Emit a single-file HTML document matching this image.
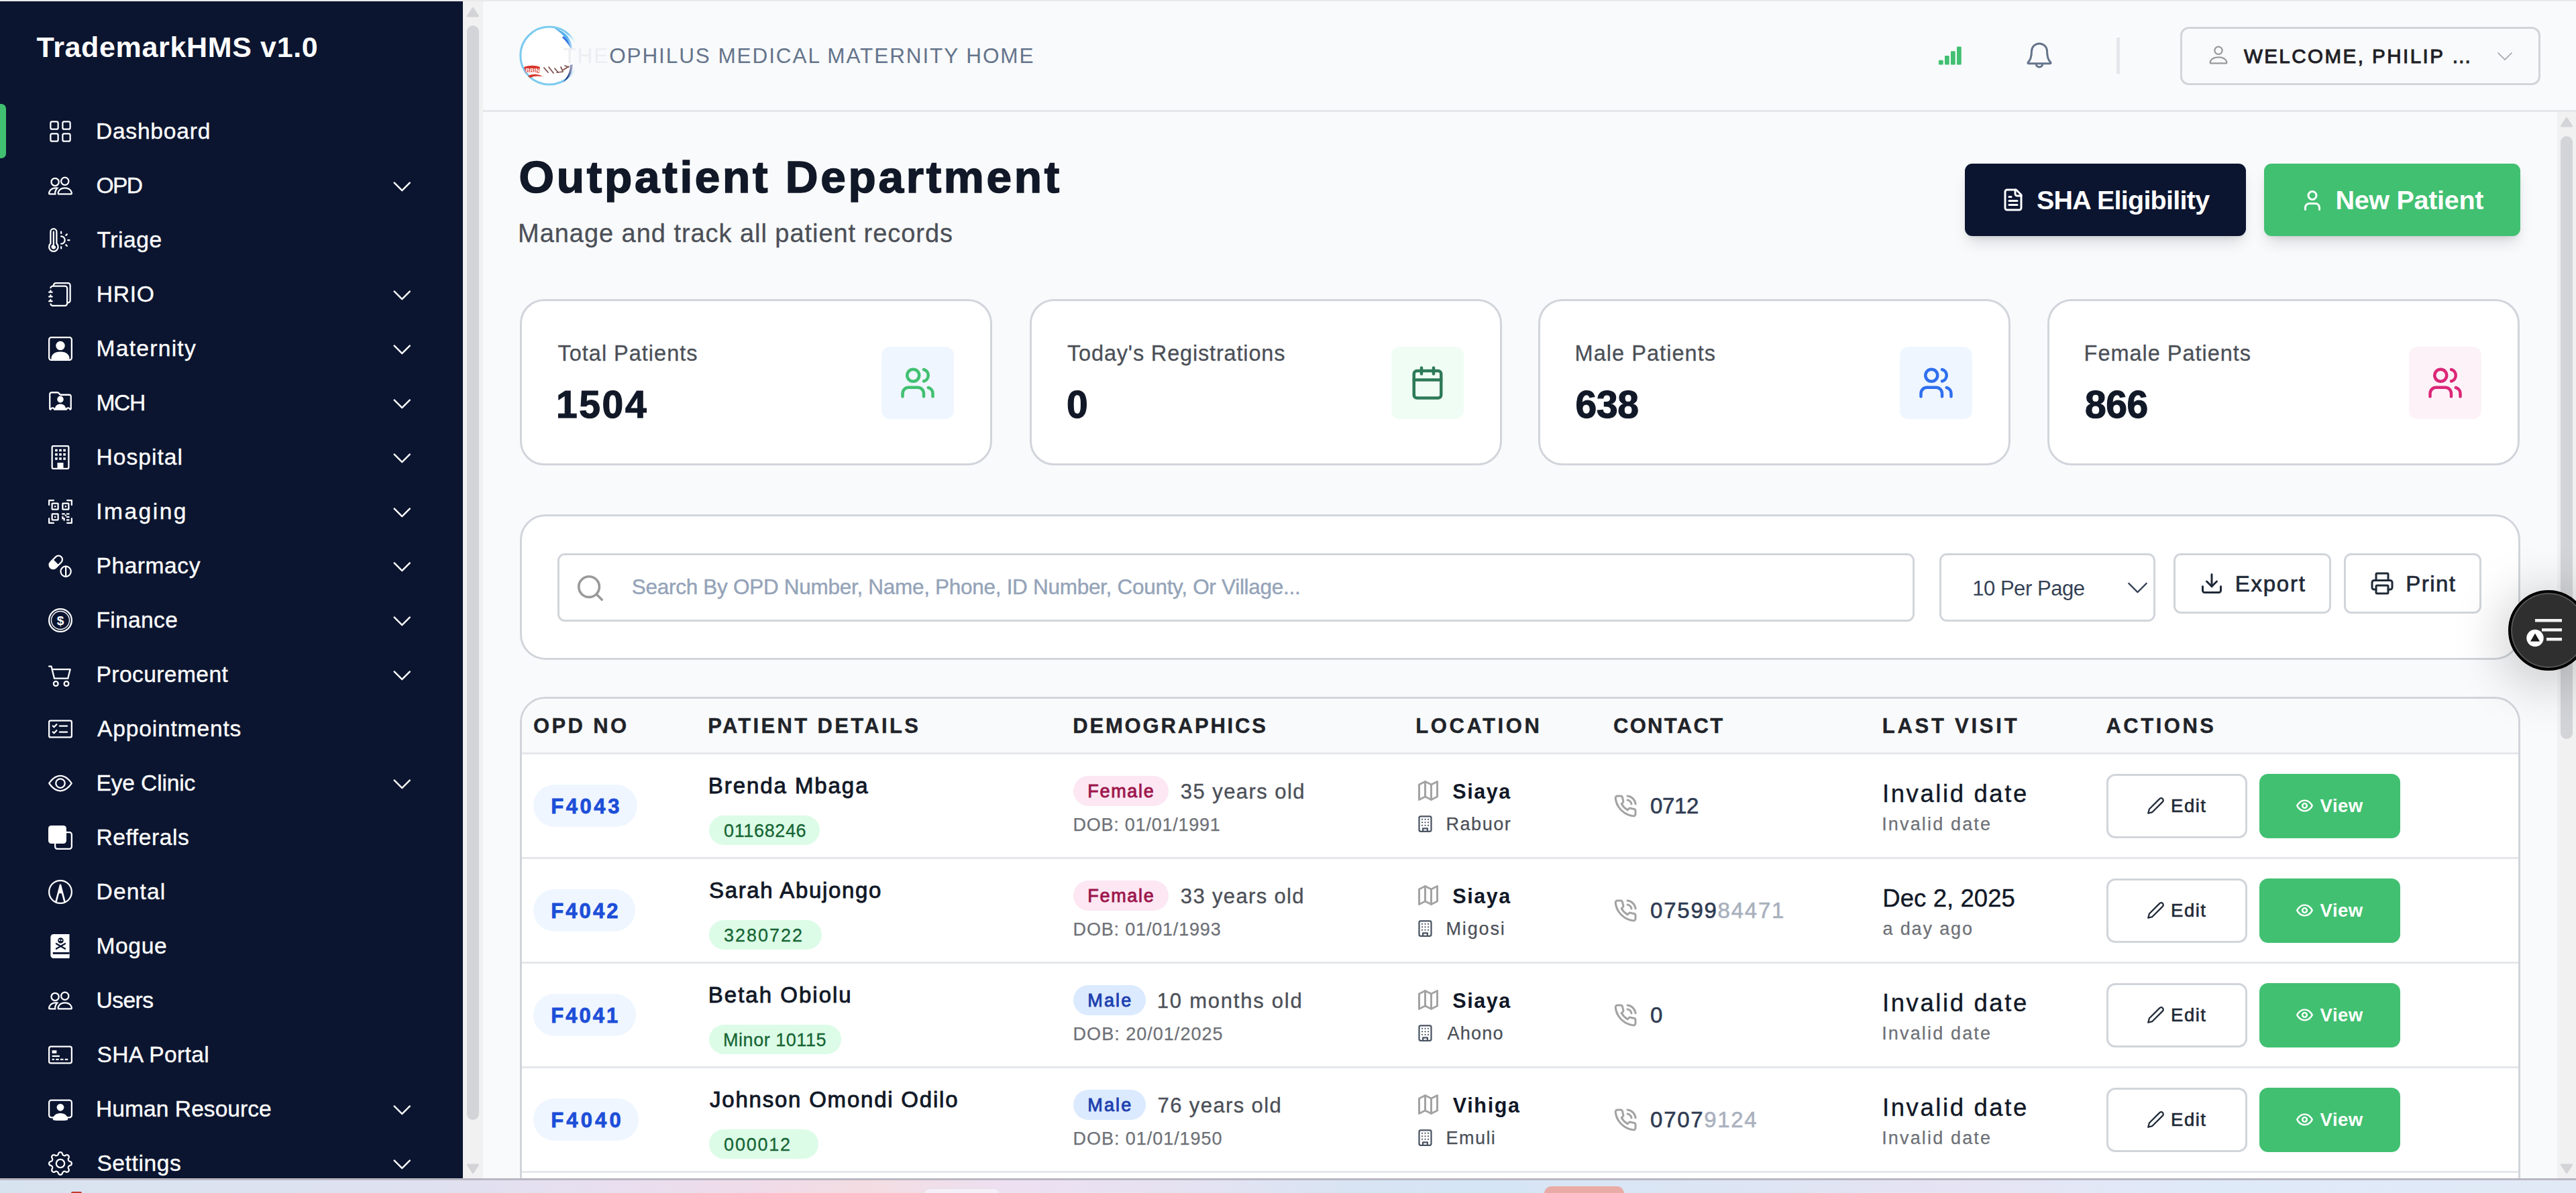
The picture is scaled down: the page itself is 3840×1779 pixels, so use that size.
<!DOCTYPE html>
<html lang="en"><head><meta charset="utf-8"><title>Outpatient Department - TrademarkHMS v1.0</title>
<style>
*{box-sizing:border-box;margin:0;padding:0}
html,body{width:3840px;height:1779px;overflow:hidden;background:#f9fafb;font-family:"Liberation Sans",sans-serif}
#main{position:absolute;left:0;top:0;width:3840px;height:1757px;overflow:hidden;background:#f9fafb}
.b{position:absolute}
.ic{position:absolute;display:block;overflow:visible}
.t{position:absolute;white-space:nowrap;line-height:1;display:block}
</style></head>
<body>
<div id="main">
<header>
<div class="b" style="left:720px;top:2px;width:3120px;height:165px;background:#f9fafb;border-bottom:3px solid #e5e7eb;"></div>
<svg class="ic" style="left:770px;top:34px" width="100" height="98" viewBox="0 0 100 98">
<g>
<circle cx="48.800" cy="49" r="43" fill="#ffffff" stroke="#7ccbf0" stroke-width="3"/>
<path d="M56 8c13 3 22 11 26 23c1 4 1 7 0 10c-3-12-10-22-26-33z" fill="#58b0ee"/>
<path d="M70 20c6 5 10 12 12 21c-4-8-8-14-14-19z" fill="#2f6fe0"/>
<path d="M11 66c8-3 17-3 24 0l-1 9c-7-2-14-2-20 0z" fill="#d8362c"/>
<path d="M17 79c7-3 15-3 22 1c-7-1-13-1-19 2z" fill="#d8362c"/>
<path d="M41 67l6 7M48 66l7 9M57 68l5 6M60 74l9-1M66 66l3 6M72 64l6 2M70 70l8-5" fill="none" stroke="#5a1f1a" stroke-width="1.700" stroke-linecap="round" opacity=".8"/>
<path d="M84 62c0 12-6 21-15 27c7-8 11-16 11-26z" fill="#1f2f7a"/>
<text x="13.500" y="73.500" font-family="Liberation Sans, sans-serif" font-size="8.500" font-weight="700" fill="#ffffff">BRIN</text>
</g>
</svg>
<div class="b" style="left:846px;top:30px;width:30px;height:106px;background:linear-gradient(90deg,rgba(249,250,251,0) 0%,#f9fafb 36%,#f9fafb 100%);"></div>
<span class="t " style="left:839.4px;top:68.0px;font-size:31.5px;font-weight:400;color:#64748b;letter-spacing:1.91px;"><span style="color:#eceef2;-webkit-text-stroke-color:#eceef2">THE</span>OPHILUS MEDICAL MATERNITY HOME</span>
<svg class="ic" style="left:2889.5px;top:64.8px;color:#41c071" width="36" height="36" viewBox="0 0 16 16" fill="currentColor" ><path d="M0 11.5a.5.5 0 0 1 .5-.5h2a.5.5 0 0 1 .5.5v2a.5.5 0 0 1-.5.5h-2a.5.5 0 0 1-.5-.5v-2zm4-3a.5.5 0 0 1 .5-.5h2a.5.5 0 0 1 .5.5v5a.5.5 0 0 1-.5.5h-2a.5.5 0 0 1-.5-.5v-5zm4-3a.5.5 0 0 1 .5-.5h2a.5.5 0 0 1 .5.5v8a.5.5 0 0 1-.5.5h-2a.5.5 0 0 1-.5-.5v-8zm4-3a.5.5 0 0 1 .5-.5h2a.5.5 0 0 1 .5.5v11a.5.5 0 0 1-.5.5h-2a.5.5 0 0 1-.5-.5v-11z"/></svg>
<svg class="ic" style="left:3018.7px;top:62px;color:#64748b" width="42" height="42" viewBox="0 0 16 16" fill="currentColor" stroke="currentColor" stroke-width=".35"><g fill="none" stroke="currentColor" stroke-width="1.15" stroke-linecap="round" stroke-linejoin="round"><path d="M8 1.100a4.400 4.400 0 0 0-4.400 4.400c0 2.900-.6 4.900-2 6.300c-.2.300 0 .700.400.700h12c.400 0 .600-.400.400-.700c-1.400-1.400-2-3.400-2-6.300A4.400 4.400 0 0 0 8 1.100z"/><path d="M6.200 12.700a1.800 1.800 0 0 0 3.600 0"/></g></svg>
<div class="b" style="left:3154.5px;top:56px;width:5px;height:54px;background:#e5e7eb;"></div>
<div class="b" style="left:3250px;top:40px;width:537px;height:87px;border:3px solid #d4d4d8;border-radius:13px;background:#f9fafb;"></div>
<svg class="ic" style="left:3289px;top:64px;color:#9a9a9a" width="36" height="36" viewBox="0 0 16 16" fill="currentColor" ><path d="M8 8a3 3 0 1 0 0-6 3 3 0 0 0 0 6zm2-3a2 2 0 1 1-4 0 2 2 0 0 1 4 0zm4 8c0 1-1 1-1 1H3s-1 0-1-1 1-4 6-4 6 3 6 4zm-1-.004c-.001-.246-.154-.986-.832-1.664C11.516 10.68 10.289 10 8 10c-2.29 0-3.516.68-4.168 1.332-.678.678-.83 1.418-.832 1.664h10z"/></svg>
<span class="t " style="left:3344.9px;top:69.3px;font-size:29.5px;font-weight:400;color:#1f1f27;letter-spacing:2.48px;-webkit-text-stroke:1.0px #1f1f27;">WELCOME, PHILIP …</span>
<svg class="ic" style="left:3714.4px;top:64px;color:#a1a1aa" width="40" height="40" viewBox="0 0 24 24" fill="none" stroke="currentColor" stroke-width="1.0" stroke-linecap="round" stroke-linejoin="round"><path d="M6 9l6 6 6-6"/></svg>
</header>
<section>
<span class="t " style="left:773.6px;top:230.3px;font-size:67.5px;font-weight:700;color:#111827;letter-spacing:3.72px;-webkit-text-stroke:1.6px #111827;">Outpatient Department</span>
<span class="t " style="left:772.1px;top:328.8px;font-size:38px;font-weight:400;color:#4b4f57;letter-spacing:0.95px;-webkit-text-stroke:0.3px #4b4f57;">Manage and track all patient records</span>
<div class="b" style="left:2929px;top:244px;width:419px;height:108px;background:#0b1530;border-radius:11px;box-shadow:0 14px 22px -6px rgba(15,23,42,.16),0 5px 9px -4px rgba(15,23,42,.10);"></div>
<svg class="ic" style="left:2982.6px;top:279.7px;color:#fff" width="36" height="36" viewBox="0 0 24 24" fill="none" stroke="currentColor" stroke-width="2" stroke-linecap="round" stroke-linejoin="round"><path d="M15 2H6a2 2 0 0 0-2 2v16a2 2 0 0 0 2 2h12a2 2 0 0 0 2-2V7Z"/><path d="M14 2v4a2 2 0 0 0 2 2h4"/><path d="M10 9H8"/><path d="M16 13H8"/><path d="M16 17H8"/></svg>
<span class="t " style="left:3035.9px;top:278.6px;font-size:39.5px;font-weight:700;color:#fff;letter-spacing:-0.73px;">SHA Eligibility</span>
<div class="b" style="left:3375px;top:244px;width:382px;height:108px;background:#41c071;border-radius:11px;box-shadow:0 14px 22px -6px rgba(15,23,42,.16),0 5px 9px -4px rgba(15,23,42,.10);"></div>
<svg class="ic" style="left:3428.7px;top:281px;color:#fff" width="36" height="36" viewBox="0 0 24 24" fill="none" stroke="currentColor" stroke-width="2" stroke-linecap="round" stroke-linejoin="round"><path d="M19 21v-2a4 4 0 0 0-4-4H9a4 4 0 0 0-4 4v2"/><circle cx="12" cy="7" r="4"/></svg>
<span class="t " style="left:3481.4px;top:278.6px;font-size:39.5px;font-weight:700;color:#fff;letter-spacing:-0.29px;">New Patient</span>
</section>
<section>
<div class="b" style="left:775px;top:446px;width:704px;height:248px;background:#fff;border:3px solid #d1d5db;border-radius:36px;"></div>
<span class="t " style="left:831.5px;top:510.5px;font-size:32.5px;font-weight:400;color:#4b4f57;letter-spacing:0.99px;-webkit-text-stroke:0.3px #4b4f57;">Total Patients</span>
<span class="t " style="left:829.0px;top:574.7px;font-size:57px;font-weight:700;color:#111827;letter-spacing:2.61px;-webkit-text-stroke:1.2px #111827;">1504</span>
<div class="b" style="left:1314px;top:517px;width:108px;height:108px;background:#eff6ff;border-radius:13px;"></div>
<svg class="ic" style="left:1341px;top:544px;color:#41c071" width="54" height="54" viewBox="0 0 24 24" fill="none" stroke="currentColor" stroke-width="2" stroke-linecap="round" stroke-linejoin="round"><path d="M16 21v-2a4 4 0 0 0-4-4H6a4 4 0 0 0-4 4v2"/><circle cx="9" cy="7" r="4"/><path d="M22 21v-2a4 4 0 0 0-3-3.870"/><path d="M16 3.130a4 4 0 0 1 0 7.750"/></svg>
<div class="b" style="left:1534.5px;top:446px;width:704px;height:248px;background:#fff;border:3px solid #d1d5db;border-radius:36px;"></div>
<span class="t " style="left:1591.0px;top:510.5px;font-size:32.5px;font-weight:400;color:#4b4f57;letter-spacing:0.83px;-webkit-text-stroke:0.3px #4b4f57;">Today&#x27;s Registrations</span>
<span class="t " style="left:1590.0px;top:574.7px;font-size:57px;font-weight:700;color:#111827;letter-spacing:0.00px;-webkit-text-stroke:1.2px #111827;">0</span>
<div class="b" style="left:2073.5px;top:517px;width:108px;height:108px;background:#f0fdf4;border-radius:13px;"></div>
<svg class="ic" style="left:2100.5px;top:544px;color:#2d7a58" width="54" height="54" viewBox="0 0 24 24" fill="none" stroke="currentColor" stroke-width="2" stroke-linecap="round" stroke-linejoin="round"><path d="M8 2v4"/><path d="M16 2v4"/><rect width="18" height="18" x="3" y="4" rx="2"/><path d="M3 10h18"/></svg>
<div class="b" style="left:2293px;top:446px;width:704px;height:248px;background:#fff;border:3px solid #d1d5db;border-radius:36px;"></div>
<span class="t " style="left:2347.6px;top:510.5px;font-size:32.5px;font-weight:400;color:#4b4f57;letter-spacing:1.04px;-webkit-text-stroke:0.3px #4b4f57;">Male Patients</span>
<span class="t " style="left:2348.6px;top:574.7px;font-size:57px;font-weight:700;color:#111827;letter-spacing:-0.34px;-webkit-text-stroke:1.2px #111827;">638</span>
<div class="b" style="left:2832px;top:517px;width:108px;height:108px;background:#eff6ff;border-radius:13px;"></div>
<svg class="ic" style="left:2859px;top:544px;color:#2f6fed" width="54" height="54" viewBox="0 0 24 24" fill="none" stroke="currentColor" stroke-width="2" stroke-linecap="round" stroke-linejoin="round"><path d="M16 21v-2a4 4 0 0 0-4-4H6a4 4 0 0 0-4 4v2"/><circle cx="9" cy="7" r="4"/><path d="M22 21v-2a4 4 0 0 0-3-3.870"/><path d="M16 3.130a4 4 0 0 1 0 7.750"/></svg>
<div class="b" style="left:3052px;top:446px;width:704px;height:248px;background:#fff;border:3px solid #d1d5db;border-radius:36px;"></div>
<span class="t " style="left:3106.6px;top:510.5px;font-size:32.5px;font-weight:400;color:#4b4f57;letter-spacing:0.97px;-webkit-text-stroke:0.3px #4b4f57;">Female Patients</span>
<span class="t " style="left:3107.9px;top:574.7px;font-size:57px;font-weight:700;color:#111827;letter-spacing:-0.34px;-webkit-text-stroke:1.2px #111827;">866</span>
<div class="b" style="left:3591px;top:517px;width:108px;height:108px;background:#fdf2f8;border-radius:13px;"></div>
<svg class="ic" style="left:3618px;top:544px;color:#db2777" width="54" height="54" viewBox="0 0 24 24" fill="none" stroke="currentColor" stroke-width="2" stroke-linecap="round" stroke-linejoin="round"><path d="M16 21v-2a4 4 0 0 0-4-4H6a4 4 0 0 0-4 4v2"/><circle cx="9" cy="7" r="4"/><path d="M22 21v-2a4 4 0 0 0-3-3.870"/><path d="M16 3.130a4 4 0 0 1 0 7.750"/></svg>
</section>
<section>
<div class="b" style="left:775px;top:767px;width:2982px;height:216.5px;background:#fff;border:3px solid #d1d5db;border-radius:38px;"></div>
<div class="b" style="left:831px;top:825px;width:2023px;height:102px;background:#fff;border:3px solid #d1d5db;border-radius:11px;"></div>
<svg class="ic" style="left:857.2px;top:854.2px;color:#9a9a9a" width="46" height="46" viewBox="0 0 24 24" fill="none" stroke="currentColor" stroke-width="1.9" stroke-linecap="round" stroke-linejoin="round"><circle cx="11" cy="11" r="8"/><path d="M21 21l-4.300-4.300"/></svg>
<span class="t " style="left:941.8px;top:860.3px;font-size:31.5px;font-weight:400;color:#94a3b8;letter-spacing:-0.29px;-webkit-text-stroke:0.4px #94a3b8;">Search By OPD Number, Name, Phone, ID Number, County, Or Village...</span>
<div class="b" style="left:2891px;top:825px;width:322px;height:102px;background:#fff;border:3px solid #d1d5db;border-radius:11px;"></div>
<span class="t " style="left:2940.2px;top:861.8px;font-size:31px;font-weight:400;color:#334155;letter-spacing:-0.46px;">10 Per Page</span>
<svg class="ic" style="left:3160.2px;top:850.3px;color:#334155" width="53" height="53" viewBox="0 0 24 24" fill="none" stroke="currentColor" stroke-width="1.0" stroke-linecap="round" stroke-linejoin="round"><path d="M6 9l6 6 6-6"/></svg>
<div class="b" style="left:3240px;top:825px;width:235px;height:90px;background:#fff;border:3px solid #d1d5db;border-radius:11px;"></div>
<svg class="ic" style="left:3279px;top:852px;color:#1f2937" width="36" height="36" viewBox="0 0 24 24" fill="none" stroke="currentColor" stroke-width="2" stroke-linecap="round" stroke-linejoin="round"><path d="M21 15v4a2 2 0 0 1-2 2H5a2 2 0 0 1-2-2v-4"/><path d="M7 10l5 5 5-5"/><path d="M12 15V3"/></svg>
<span class="t " style="left:3331.7px;top:853.7px;font-size:33px;font-weight:400;color:#1f2937;letter-spacing:1.75px;-webkit-text-stroke:0.7px #1f2937;">Export</span>
<div class="b" style="left:3494px;top:825px;width:205px;height:90px;background:#fff;border:3px solid #d1d5db;border-radius:11px;"></div>
<svg class="ic" style="left:3532.5px;top:852px;color:#1f2937" width="36" height="36" viewBox="0 0 24 24" fill="none" stroke="currentColor" stroke-width="2" stroke-linecap="round" stroke-linejoin="round"><path d="M6 18H4a2 2 0 0 1-2-2v-5a2 2 0 0 1 2-2h16a2 2 0 0 1 2 2v5a2 2 0 0 1-2 2h-2"/><path d="M6 9V3a1 1 0 0 1 1-1h10a1 1 0 0 1 1 1v6"/><rect x="6" y="14" width="12" height="8" rx="1"/></svg>
<span class="t " style="left:3586.3px;top:853.7px;font-size:33px;font-weight:400;color:#1f2937;letter-spacing:1.45px;-webkit-text-stroke:0.7px #1f2937;">Print</span>
</section>
<section>
<div class="b" style="left:775px;top:1039px;width:2982px;height:760px;background:#fff;border:3px solid #d1d5db;border-radius:38px;overflow:hidden;"><div class="b" style="left:0;top:0;width:2982px;height:83px;background:#f9fafb;border-bottom:3px solid #e5e7eb"></div></div>
<span class="t " style="left:795.0px;top:1067.3px;font-size:31px;font-weight:700;color:#1f2329;letter-spacing:3.36px;-webkit-text-stroke:0.4px #1f2329;">OPD NO</span>
<span class="t " style="left:1055.2px;top:1067.3px;font-size:31px;font-weight:700;color:#1f2329;letter-spacing:3.34px;-webkit-text-stroke:0.4px #1f2329;">PATIENT DETAILS</span>
<span class="t " style="left:1599.2px;top:1067.3px;font-size:31px;font-weight:700;color:#1f2329;letter-spacing:2.83px;-webkit-text-stroke:0.4px #1f2329;">DEMOGRAPHICS</span>
<span class="t " style="left:2110.2px;top:1067.3px;font-size:31px;font-weight:700;color:#1f2329;letter-spacing:3.59px;-webkit-text-stroke:0.4px #1f2329;">LOCATION</span>
<span class="t " style="left:2405.0px;top:1067.3px;font-size:31px;font-weight:700;color:#1f2329;letter-spacing:2.31px;-webkit-text-stroke:0.4px #1f2329;">CONTACT</span>
<span class="t " style="left:2805.7px;top:1067.3px;font-size:31px;font-weight:700;color:#1f2329;letter-spacing:3.76px;-webkit-text-stroke:0.4px #1f2329;">LAST VISIT</span>
<span class="t " style="left:3139.4px;top:1067.3px;font-size:31px;font-weight:700;color:#1f2329;letter-spacing:3.51px;-webkit-text-stroke:0.4px #1f2329;">ACTIONS</span>
<div class="b" style="left:778px;top:1277.5px;width:2976px;height:3px;background:#e5e7eb;"></div>
<div class="b" style="left:794.7px;top:1170px;width:155px;height:63px;background:#eff6ff;border-radius:32px;"></div>
<span class="t " style="left:821.2px;top:1186.8px;font-size:31px;font-weight:700;color:#1d4ed8;letter-spacing:3.58px;-webkit-text-stroke:0.8px #1d4ed8;">F4043</span>
<span class="t " style="left:1055.8px;top:1154.7px;font-size:33px;font-weight:400;color:#111827;letter-spacing:1.93px;-webkit-text-stroke:0.9px #111827;">Brenda Mbaga</span>
<div class="b" style="left:1057px;top:1215.5px;width:165px;height:44px;background:#dcfce7;border-radius:22px;"></div>
<span class="t " style="left:1079.1px;top:1225.5px;font-size:27px;font-weight:400;color:#166534;letter-spacing:0.62px;-webkit-text-stroke:0.3px #166534;">01168246</span>
<div class="b" style="left:1600px;top:1157px;width:142px;height:45px;background:#fce7f3;border-radius:23px;"></div>
<span class="t " style="left:1621.3px;top:1167.1px;font-size:27px;font-weight:400;color:#9d174d;letter-spacing:1.69px;-webkit-text-stroke:0.9px #9d174d;">Female</span>
<span class="t " style="left:1759.8px;top:1164.8px;font-size:31px;font-weight:400;color:#4b4f57;letter-spacing:1.44px;-webkit-text-stroke:0.35px #4b4f57;">35 years old</span>
<span class="t " style="left:1599.6px;top:1217.1px;font-size:27px;font-weight:400;color:#6e7177;letter-spacing:0.75px;-webkit-text-stroke:0.25px #6e7177;">DOB: 01/01/1991</span>
<svg class="ic" style="left:2111px;top:1161px;color:#a3a3a3" width="36" height="36" viewBox="0 0 24 24" fill="none" stroke="currentColor" stroke-width="2" stroke-linecap="round" stroke-linejoin="round"><path d="M3 6l6-3 6 3 6-3v15l-6 3-6-3-6 3z"/><path d="M9 3v15"/><path d="M15 6v15"/></svg>
<span class="t " style="left:2165.2px;top:1164.8px;font-size:30.5px;font-weight:700;color:#111827;letter-spacing:1.61px;">Siaya</span>
<svg class="ic" style="left:2111px;top:1215px;color:#4b5563" width="27" height="27" viewBox="0 0 24 24" fill="none" stroke="currentColor" stroke-width="2" stroke-linecap="round" stroke-linejoin="round"><rect width="16" height="20" x="4" y="2" rx="2"/><path d="M9 22v-4h6v4"/><path d="M8 6h.01"/><path d="M16 6h.01"/><path d="M12 6h.01"/><path d="M12 10h.01"/><path d="M12 14h.01"/><path d="M16 10h.01"/><path d="M16 14h.01"/><path d="M8 10h.01"/><path d="M8 14h.01"/></svg>
<span class="t " style="left:2155.5px;top:1216.1px;font-size:27px;font-weight:400;color:#4b4f57;letter-spacing:1.55px;-webkit-text-stroke:0.25px #4b4f57;">Rabuor</span>
<svg class="ic" style="left:2405px;top:1184px;color:#a3a3a3" width="36" height="36" viewBox="0 0 24 24" fill="none" stroke="currentColor" stroke-width="2" stroke-linecap="round" stroke-linejoin="round"><path d="M22 16.920v3a2 2 0 0 1-2.180 2 19.790 19.790 0 0 1-8.630-3.070 19.500 19.500 0 0 1-6-6 19.790 19.790 0 0 1-3.070-8.670A2 2 0 0 1 4.110 2h3a2 2 0 0 1 2 1.720 12.840 12.840 0 0 0 .7 2.810 2 2 0 0 1-.45 2.110L8.090 9.910a16 16 0 0 0 6 6l1.270-1.270a2 2 0 0 1 2.110-.45 12.840 12.840 0 0 0 2.810.7A2 2 0 0 1 22 16.920z"/><path d="M14.050 2a9 9 0 0 1 8 7.940"/><path d="M14.050 6A5 5 0 0 1 18 10"/></svg>
<span class="t " style="left:2460.1px;top:1185.1px;font-size:33px;font-weight:400;color:#2f3b52;letter-spacing:-0.38px;-webkit-text-stroke:0.6px #2f3b52;">0712</span>
<span class="t " style="left:2805.9px;top:1166.0px;font-size:36.5px;font-weight:400;color:#111827;letter-spacing:2.61px;-webkit-text-stroke:0.4px #111827;">Invalid date</span>
<span class="t " style="left:2805.2px;top:1216.1px;font-size:27px;font-weight:400;color:#6e7177;letter-spacing:2.16px;-webkit-text-stroke:0.25px #6e7177;">Invalid date</span>
<div class="b" style="left:3140px;top:1154px;width:210px;height:96px;background:#fff;border:3px solid #d1d5db;border-radius:13px;"></div>
<svg class="ic" style="left:3199.5px;top:1187.5px;color:#1f2937" width="27" height="27" viewBox="0 0 24 24" fill="none" stroke="currentColor" stroke-width="2" stroke-linecap="round" stroke-linejoin="round"><path d="M17 3a2.850 2.830 0 1 1 4 4L7.500 20.500 2 22l1.500-5.500Z"/></svg>
<span class="t " style="left:3236.1px;top:1188.4px;font-size:27.5px;font-weight:400;color:#1f2937;letter-spacing:1.46px;-webkit-text-stroke:0.6px #1f2937;">Edit</span>
<div class="b" style="left:3368px;top:1154px;width:210px;height:96px;background:#41c071;border-radius:13px;"></div>
<svg class="ic" style="left:3421.8px;top:1188px;color:#fff" width="27" height="27" viewBox="0 0 24 24" fill="none" stroke="currentColor" stroke-width="2.2" stroke-linecap="round" stroke-linejoin="round"><path d="M2 12s3-7 10-7 10 7 10 7-3 7-10 7-10-7-10-7Z"/><circle cx="12" cy="12" r="3"/></svg>
<span class="t " style="left:3458.6px;top:1188.4px;font-size:27.5px;font-weight:700;color:#fff;letter-spacing:0.47px;">View</span>
<div class="b" style="left:778px;top:1433.5px;width:2976px;height:3px;background:#e5e7eb;"></div>
<div class="b" style="left:794.7px;top:1326px;width:152.5px;height:63px;background:#eff6ff;border-radius:32px;"></div>
<span class="t " style="left:821.2px;top:1342.8px;font-size:31px;font-weight:700;color:#1d4ed8;letter-spacing:3.12px;-webkit-text-stroke:0.8px #1d4ed8;">F4042</span>
<span class="t " style="left:1057.0px;top:1310.7px;font-size:33px;font-weight:400;color:#111827;letter-spacing:1.66px;-webkit-text-stroke:0.9px #111827;">Sarah Abujongo</span>
<div class="b" style="left:1057px;top:1371.5px;width:167.6px;height:44px;background:#dcfce7;border-radius:22px;"></div>
<span class="t " style="left:1079.1px;top:1381.5px;font-size:27px;font-weight:400;color:#166534;letter-spacing:1.98px;-webkit-text-stroke:0.3px #166534;">3280722</span>
<div class="b" style="left:1600px;top:1313px;width:142px;height:45px;background:#fce7f3;border-radius:23px;"></div>
<span class="t " style="left:1621.3px;top:1323.1px;font-size:27px;font-weight:400;color:#9d174d;letter-spacing:1.69px;-webkit-text-stroke:0.9px #9d174d;">Female</span>
<span class="t " style="left:1759.8px;top:1320.8px;font-size:31px;font-weight:400;color:#4b4f57;letter-spacing:1.35px;-webkit-text-stroke:0.35px #4b4f57;">33 years old</span>
<span class="t " style="left:1599.6px;top:1373.1px;font-size:27px;font-weight:400;color:#6e7177;letter-spacing:0.82px;-webkit-text-stroke:0.25px #6e7177;">DOB: 01/01/1993</span>
<svg class="ic" style="left:2111px;top:1317px;color:#a3a3a3" width="36" height="36" viewBox="0 0 24 24" fill="none" stroke="currentColor" stroke-width="2" stroke-linecap="round" stroke-linejoin="round"><path d="M3 6l6-3 6 3 6-3v15l-6 3-6-3-6 3z"/><path d="M9 3v15"/><path d="M15 6v15"/></svg>
<span class="t " style="left:2165.2px;top:1320.8px;font-size:30.5px;font-weight:700;color:#111827;letter-spacing:1.61px;">Siaya</span>
<svg class="ic" style="left:2111px;top:1371px;color:#4b5563" width="27" height="27" viewBox="0 0 24 24" fill="none" stroke="currentColor" stroke-width="2" stroke-linecap="round" stroke-linejoin="round"><rect width="16" height="20" x="4" y="2" rx="2"/><path d="M9 22v-4h6v4"/><path d="M8 6h.01"/><path d="M16 6h.01"/><path d="M12 6h.01"/><path d="M12 10h.01"/><path d="M12 14h.01"/><path d="M16 10h.01"/><path d="M16 14h.01"/><path d="M8 10h.01"/><path d="M8 14h.01"/></svg>
<span class="t " style="left:2155.5px;top:1372.1px;font-size:27px;font-weight:400;color:#4b4f57;letter-spacing:1.84px;-webkit-text-stroke:0.25px #4b4f57;">Migosi</span>
<svg class="ic" style="left:2405px;top:1340px;color:#a3a3a3" width="36" height="36" viewBox="0 0 24 24" fill="none" stroke="currentColor" stroke-width="2" stroke-linecap="round" stroke-linejoin="round"><path d="M22 16.920v3a2 2 0 0 1-2.180 2 19.790 19.790 0 0 1-8.630-3.070 19.500 19.500 0 0 1-6-6 19.790 19.790 0 0 1-3.070-8.670A2 2 0 0 1 4.110 2h3a2 2 0 0 1 2 1.720 12.840 12.840 0 0 0 .7 2.810 2 2 0 0 1-.45 2.110L8.090 9.910a16 16 0 0 0 6 6l1.270-1.270a2 2 0 0 1 2.110-.45 12.840 12.840 0 0 0 2.810.7A2 2 0 0 1 22 16.920z"/><path d="M14.050 2a9 9 0 0 1 8 7.940"/><path d="M14.050 6A5 5 0 0 1 18 10"/></svg>
<span class="t " style="left:2460.1px;top:1341.1px;font-size:33px;font-weight:400;color:#2f3b52;letter-spacing:1.75px;-webkit-text-stroke:0.6px #2f3b52;">07599<span style="color:#a9b0bd;-webkit-text-stroke-color:#a9b0bd">84471</span></span>
<span class="t " style="left:2806.3px;top:1322.0px;font-size:36.5px;font-weight:400;color:#111827;letter-spacing:0.07px;-webkit-text-stroke:0.4px #111827;">Dec 2, 2025</span>
<span class="t " style="left:2806.5px;top:1372.1px;font-size:27px;font-weight:400;color:#6e7177;letter-spacing:1.86px;-webkit-text-stroke:0.25px #6e7177;">a day ago</span>
<div class="b" style="left:3140px;top:1310px;width:210px;height:96px;background:#fff;border:3px solid #d1d5db;border-radius:13px;"></div>
<svg class="ic" style="left:3199.5px;top:1343.5px;color:#1f2937" width="27" height="27" viewBox="0 0 24 24" fill="none" stroke="currentColor" stroke-width="2" stroke-linecap="round" stroke-linejoin="round"><path d="M17 3a2.850 2.830 0 1 1 4 4L7.500 20.500 2 22l1.500-5.500Z"/></svg>
<span class="t " style="left:3236.1px;top:1344.4px;font-size:27.5px;font-weight:400;color:#1f2937;letter-spacing:1.46px;-webkit-text-stroke:0.6px #1f2937;">Edit</span>
<div class="b" style="left:3368px;top:1310px;width:210px;height:96px;background:#41c071;border-radius:13px;"></div>
<svg class="ic" style="left:3421.8px;top:1344px;color:#fff" width="27" height="27" viewBox="0 0 24 24" fill="none" stroke="currentColor" stroke-width="2.2" stroke-linecap="round" stroke-linejoin="round"><path d="M2 12s3-7 10-7 10 7 10 7-3 7-10 7-10-7-10-7Z"/><circle cx="12" cy="12" r="3"/></svg>
<span class="t " style="left:3458.6px;top:1344.4px;font-size:27.5px;font-weight:700;color:#fff;letter-spacing:0.47px;">View</span>
<div class="b" style="left:778px;top:1589.5px;width:2976px;height:3px;background:#e5e7eb;"></div>
<div class="b" style="left:794.7px;top:1482px;width:153.7px;height:63px;background:#eff6ff;border-radius:32px;"></div>
<span class="t " style="left:821.2px;top:1498.8px;font-size:31px;font-weight:700;color:#1d4ed8;letter-spacing:3.03px;-webkit-text-stroke:0.8px #1d4ed8;">F4041</span>
<span class="t " style="left:1055.8px;top:1466.7px;font-size:33px;font-weight:400;color:#111827;letter-spacing:2.01px;-webkit-text-stroke:0.9px #111827;">Betah Obiolu</span>
<div class="b" style="left:1057px;top:1527.5px;width:197px;height:44px;background:#dcfce7;border-radius:22px;"></div>
<span class="t " style="left:1078.0px;top:1537.5px;font-size:27px;font-weight:400;color:#166534;letter-spacing:0.54px;-webkit-text-stroke:0.3px #166534;">Minor 10115</span>
<div class="b" style="left:1600px;top:1469px;width:108px;height:45px;background:#dbeafe;border-radius:23px;"></div>
<span class="t " style="left:1621.3px;top:1479.1px;font-size:27px;font-weight:400;color:#1e40af;letter-spacing:2.13px;-webkit-text-stroke:0.9px #1e40af;">Male</span>
<span class="t " style="left:1724.8px;top:1476.8px;font-size:31px;font-weight:400;color:#4b4f57;letter-spacing:1.77px;-webkit-text-stroke:0.35px #4b4f57;">10 months old</span>
<span class="t " style="left:1599.6px;top:1529.1px;font-size:27px;font-weight:400;color:#6e7177;letter-spacing:1.02px;-webkit-text-stroke:0.25px #6e7177;">DOB: 20/01/2025</span>
<svg class="ic" style="left:2111px;top:1473px;color:#a3a3a3" width="36" height="36" viewBox="0 0 24 24" fill="none" stroke="currentColor" stroke-width="2" stroke-linecap="round" stroke-linejoin="round"><path d="M3 6l6-3 6 3 6-3v15l-6 3-6-3-6 3z"/><path d="M9 3v15"/><path d="M15 6v15"/></svg>
<span class="t " style="left:2165.2px;top:1476.8px;font-size:30.5px;font-weight:700;color:#111827;letter-spacing:1.61px;">Siaya</span>
<svg class="ic" style="left:2111px;top:1527px;color:#4b5563" width="27" height="27" viewBox="0 0 24 24" fill="none" stroke="currentColor" stroke-width="2" stroke-linecap="round" stroke-linejoin="round"><rect width="16" height="20" x="4" y="2" rx="2"/><path d="M9 22v-4h6v4"/><path d="M8 6h.01"/><path d="M16 6h.01"/><path d="M12 6h.01"/><path d="M12 10h.01"/><path d="M12 14h.01"/><path d="M16 10h.01"/><path d="M16 14h.01"/><path d="M8 10h.01"/><path d="M8 14h.01"/></svg>
<span class="t " style="left:2157.6px;top:1528.1px;font-size:27px;font-weight:400;color:#4b4f57;letter-spacing:1.20px;-webkit-text-stroke:0.25px #4b4f57;">Ahono</span>
<svg class="ic" style="left:2405px;top:1496px;color:#a3a3a3" width="36" height="36" viewBox="0 0 24 24" fill="none" stroke="currentColor" stroke-width="2" stroke-linecap="round" stroke-linejoin="round"><path d="M22 16.920v3a2 2 0 0 1-2.180 2 19.790 19.790 0 0 1-8.630-3.070 19.500 19.500 0 0 1-6-6 19.790 19.790 0 0 1-3.070-8.670A2 2 0 0 1 4.110 2h3a2 2 0 0 1 2 1.720 12.840 12.840 0 0 0 .7 2.810 2 2 0 0 1-.45 2.110L8.090 9.910a16 16 0 0 0 6 6l1.270-1.270a2 2 0 0 1 2.110-.45 12.840 12.840 0 0 0 2.810.7A2 2 0 0 1 22 16.920z"/><path d="M14.050 2a9 9 0 0 1 8 7.940"/><path d="M14.050 6A5 5 0 0 1 18 10"/></svg>
<span class="t " style="left:2460.1px;top:1497.1px;font-size:33px;font-weight:400;color:#2f3b52;letter-spacing:0.00px;-webkit-text-stroke:0.6px #2f3b52;">0</span>
<span class="t " style="left:2805.9px;top:1478.0px;font-size:36.5px;font-weight:400;color:#111827;letter-spacing:2.61px;-webkit-text-stroke:0.4px #111827;">Invalid date</span>
<span class="t " style="left:2805.2px;top:1528.1px;font-size:27px;font-weight:400;color:#6e7177;letter-spacing:2.16px;-webkit-text-stroke:0.25px #6e7177;">Invalid date</span>
<div class="b" style="left:3140px;top:1466px;width:210px;height:96px;background:#fff;border:3px solid #d1d5db;border-radius:13px;"></div>
<svg class="ic" style="left:3199.5px;top:1499.5px;color:#1f2937" width="27" height="27" viewBox="0 0 24 24" fill="none" stroke="currentColor" stroke-width="2" stroke-linecap="round" stroke-linejoin="round"><path d="M17 3a2.850 2.830 0 1 1 4 4L7.500 20.500 2 22l1.500-5.500Z"/></svg>
<span class="t " style="left:3236.1px;top:1500.4px;font-size:27.5px;font-weight:400;color:#1f2937;letter-spacing:1.46px;-webkit-text-stroke:0.6px #1f2937;">Edit</span>
<div class="b" style="left:3368px;top:1466px;width:210px;height:96px;background:#41c071;border-radius:13px;"></div>
<svg class="ic" style="left:3421.8px;top:1500px;color:#fff" width="27" height="27" viewBox="0 0 24 24" fill="none" stroke="currentColor" stroke-width="2.2" stroke-linecap="round" stroke-linejoin="round"><path d="M2 12s3-7 10-7 10 7 10 7-3 7-10 7-10-7-10-7Z"/><circle cx="12" cy="12" r="3"/></svg>
<span class="t " style="left:3458.6px;top:1500.4px;font-size:27.5px;font-weight:700;color:#fff;letter-spacing:0.47px;">View</span>
<div class="b" style="left:778px;top:1745.5px;width:2976px;height:3px;background:#e5e7eb;"></div>
<div class="b" style="left:794.7px;top:1638px;width:157.8px;height:63px;background:#eff6ff;border-radius:32px;"></div>
<span class="t " style="left:821.2px;top:1654.8px;font-size:31px;font-weight:700;color:#1d4ed8;letter-spacing:4.17px;-webkit-text-stroke:0.8px #1d4ed8;">F4040</span>
<span class="t " style="left:1058.0px;top:1622.7px;font-size:33px;font-weight:400;color:#111827;letter-spacing:1.78px;-webkit-text-stroke:0.9px #111827;">Johnson Omondi Odilo</span>
<div class="b" style="left:1057px;top:1683.5px;width:162.7px;height:44px;background:#dcfce7;border-radius:22px;"></div>
<span class="t " style="left:1079.1px;top:1693.5px;font-size:27px;font-weight:400;color:#166534;letter-spacing:1.79px;-webkit-text-stroke:0.3px #166534;">000012</span>
<div class="b" style="left:1600px;top:1625px;width:108px;height:45px;background:#dbeafe;border-radius:23px;"></div>
<span class="t " style="left:1621.3px;top:1635.1px;font-size:27px;font-weight:400;color:#1e40af;letter-spacing:2.13px;-webkit-text-stroke:0.9px #1e40af;">Male</span>
<span class="t " style="left:1725.6px;top:1632.8px;font-size:31px;font-weight:400;color:#4b4f57;letter-spacing:1.39px;-webkit-text-stroke:0.35px #4b4f57;">76 years old</span>
<span class="t " style="left:1599.6px;top:1685.1px;font-size:27px;font-weight:400;color:#6e7177;letter-spacing:0.95px;-webkit-text-stroke:0.25px #6e7177;">DOB: 01/01/1950</span>
<svg class="ic" style="left:2111px;top:1629px;color:#a3a3a3" width="36" height="36" viewBox="0 0 24 24" fill="none" stroke="currentColor" stroke-width="2" stroke-linecap="round" stroke-linejoin="round"><path d="M3 6l6-3 6 3 6-3v15l-6 3-6-3-6 3z"/><path d="M9 3v15"/><path d="M15 6v15"/></svg>
<span class="t " style="left:2165.8px;top:1632.8px;font-size:30.5px;font-weight:700;color:#111827;letter-spacing:1.65px;">Vihiga</span>
<svg class="ic" style="left:2111px;top:1683px;color:#4b5563" width="27" height="27" viewBox="0 0 24 24" fill="none" stroke="currentColor" stroke-width="2" stroke-linecap="round" stroke-linejoin="round"><rect width="16" height="20" x="4" y="2" rx="2"/><path d="M9 22v-4h6v4"/><path d="M8 6h.01"/><path d="M16 6h.01"/><path d="M12 6h.01"/><path d="M12 10h.01"/><path d="M12 14h.01"/><path d="M16 10h.01"/><path d="M16 14h.01"/><path d="M8 10h.01"/><path d="M8 14h.01"/></svg>
<span class="t " style="left:2155.5px;top:1684.1px;font-size:27px;font-weight:400;color:#4b4f57;letter-spacing:1.46px;-webkit-text-stroke:0.25px #4b4f57;">Emuli</span>
<svg class="ic" style="left:2405px;top:1652px;color:#a3a3a3" width="36" height="36" viewBox="0 0 24 24" fill="none" stroke="currentColor" stroke-width="2" stroke-linecap="round" stroke-linejoin="round"><path d="M22 16.920v3a2 2 0 0 1-2.180 2 19.790 19.790 0 0 1-8.630-3.070 19.500 19.500 0 0 1-6-6 19.790 19.790 0 0 1-3.070-8.670A2 2 0 0 1 4.110 2h3a2 2 0 0 1 2 1.720 12.840 12.840 0 0 0 .7 2.810 2 2 0 0 1-.45 2.110L8.090 9.910a16 16 0 0 0 6 6l1.270-1.270a2 2 0 0 1 2.110-.45 12.840 12.840 0 0 0 2.810.7A2 2 0 0 1 22 16.920z"/><path d="M14.050 2a9 9 0 0 1 8 7.940"/><path d="M14.050 6A5 5 0 0 1 18 10"/></svg>
<span class="t " style="left:2460.1px;top:1653.1px;font-size:33px;font-weight:400;color:#2f3b52;letter-spacing:1.68px;-webkit-text-stroke:0.6px #2f3b52;">0707<span style="color:#aab1be;-webkit-text-stroke-color:#aab1be">9124</span></span>
<span class="t " style="left:2805.9px;top:1634.0px;font-size:36.5px;font-weight:400;color:#111827;letter-spacing:2.61px;-webkit-text-stroke:0.4px #111827;">Invalid date</span>
<span class="t " style="left:2805.2px;top:1684.1px;font-size:27px;font-weight:400;color:#6e7177;letter-spacing:2.16px;-webkit-text-stroke:0.25px #6e7177;">Invalid date</span>
<div class="b" style="left:3140px;top:1622px;width:210px;height:96px;background:#fff;border:3px solid #d1d5db;border-radius:13px;"></div>
<svg class="ic" style="left:3199.5px;top:1655.5px;color:#1f2937" width="27" height="27" viewBox="0 0 24 24" fill="none" stroke="currentColor" stroke-width="2" stroke-linecap="round" stroke-linejoin="round"><path d="M17 3a2.850 2.830 0 1 1 4 4L7.500 20.500 2 22l1.500-5.500Z"/></svg>
<span class="t " style="left:3236.1px;top:1656.4px;font-size:27.5px;font-weight:400;color:#1f2937;letter-spacing:1.46px;-webkit-text-stroke:0.6px #1f2937;">Edit</span>
<div class="b" style="left:3368px;top:1622px;width:210px;height:96px;background:#41c071;border-radius:13px;"></div>
<svg class="ic" style="left:3421.8px;top:1656px;color:#fff" width="27" height="27" viewBox="0 0 24 24" fill="none" stroke="currentColor" stroke-width="2.2" stroke-linecap="round" stroke-linejoin="round"><path d="M2 12s3-7 10-7 10 7 10 7-3 7-10 7-10-7-10-7Z"/><circle cx="12" cy="12" r="3"/></svg>
<span class="t " style="left:3458.6px;top:1656.4px;font-size:27.5px;font-weight:700;color:#fff;letter-spacing:0.47px;">View</span>
</section>
<div class="b" style="left:3812px;top:167px;width:28px;height:1590px;background:#f1f1f2;"></div>
<svg class="ic" style="left:3817px;top:175px" width="18" height="15" viewBox="0 0 18 15"><path d="M9 1.500L16.500 13h-15z" fill="#d3d4d7" stroke="#d3d4d7" stroke-width="3" stroke-linejoin="round"/></svg>
<div class="b" style="left:3817px;top:203px;width:18px;height:899px;background:#d3d4d7;border-radius:9px;"></div>
<svg class="ic" style="left:3817px;top:1735px" width="18" height="15" viewBox="0 0 18 15"><path d="M9 13.500L16.500 2h-15z" fill="#d3d4d7" stroke="#d3d4d7" stroke-width="3" stroke-linejoin="round"/></svg>
<div class="b" style="left:3739px;top:880px;width:120px;height:120px;border-radius:50%;background:#2f2f2f;border:4px solid #000;box-shadow:0 0 0 0 #000, inset 0 0 0 2px #555, 0 12px 70px 16px rgba(0,0,0,.17);"></div>
<svg class="ic" style="left:3760px;top:915px" width="64" height="52" viewBox="0 0 64 52"><path d="M19 8h40v4.500H19zM29 22h30v4.500H29zM36 36h23v4.500H36z" fill="#f2f2f2"/><circle cx="19" cy="36.500" r="12.700" fill="#fff"/><path d="M19 29.500l7 12H12z" fill="#1a1a1a"/></svg>
</div>
<nav>
<div class="b" id="side" style="left:0;top:2px;width:690px;height:1755px;background:#0b1530;"></div>
<span class="t " style="left:54.6px;top:48.6px;font-size:43px;font-weight:700;color:#fff;letter-spacing:0.65px;">TrademarkHMS v1.0</span>
<div class="b" style="left:0px;top:155px;width:9px;height:81px;background:#41c071;border-radius:0 7px 7px 0;"></div>
<svg class="ic" style="left:72px;top:178px;color:#fff" width="36" height="36" viewBox="0 0 16 16" fill="currentColor" ><path d="M1 2.5A1.5 1.5 0 0 1 2.5 1h3A1.5 1.5 0 0 1 7 2.5v3A1.5 1.5 0 0 1 5.5 7h-3A1.5 1.5 0 0 1 1 5.5v-3zM2.5 2a.5.5 0 0 0-.5.5v3a.5.5 0 0 0 .5.5h3a.5.5 0 0 0 .5-.5v-3a.5.5 0 0 0-.5-.5h-3zm6.5.5A1.5 1.5 0 0 1 10.5 1h3A1.5 1.5 0 0 1 15 2.5v3A1.5 1.5 0 0 1 13.5 7h-3A1.5 1.5 0 0 1 9 5.5v-3zm1.5-.5a.5.5 0 0 0-.5.5v3a.5.5 0 0 0 .5.5h3a.5.5 0 0 0 .5-.5v-3a.5.5 0 0 0-.5-.5h-3zM1 10.5A1.5 1.5 0 0 1 2.5 9h3A1.5 1.5 0 0 1 7 10.5v3A1.5 1.5 0 0 1 5.5 15h-3A1.5 1.5 0 0 1 1 13.5v-3zm1.5-.5a.5.5 0 0 0-.5.5v3a.5.5 0 0 0 .5.5h3a.5.5 0 0 0 .5-.5v-3a.5.5 0 0 0-.5-.5h-3zm6.5.5A1.5 1.5 0 0 1 10.5 9h3a1.5 1.5 0 0 1 1.5 1.5v3a1.5 1.5 0 0 1-1.5 1.5h-3A1.5 1.5 0 0 1 9 13.5v-3zm1.5-.5a.5.5 0 0 0-.5.5v3a.5.5 0 0 0 .5.5h3a.5.5 0 0 0 .5-.5v-3a.5.5 0 0 0-.5-.5h-3z"/></svg>
<span class="t " style="left:142.9px;top:179.3px;font-size:33.6px;font-weight:400;color:#fff;letter-spacing:0.77px;-webkit-text-stroke:0.35px #fff;">Dashboard</span>
<svg class="ic" style="left:72px;top:259px;color:#fff" width="36" height="36" viewBox="0 0 16 16" fill="currentColor" ><path d="M15 14s1 0 1-1-1-4-5-4-5 3-5 4 1 1 1 1h8Zm-7.978-1A.261.261 0 0 1 7 12.996c.001-.264.167-1.03.76-1.72C8.312 10.629 9.282 10 11 10c1.717 0 2.687.63 3.24 1.276.593.69.758 1.457.76 1.72l-.008.002a.274.274 0 0 1-.014.002H7.022ZM11 7a2 2 0 1 0 0-4 2 2 0 0 0 0 4Zm3-2a3 3 0 1 1-6 0 3 3 0 0 1 6 0ZM6.936 9.28a5.88 5.88 0 0 0-1.23-.247A7.35 7.35 0 0 0 5 9c-4 0-5 3-5 4 0 .667.333 1 1 1h4.216A2.238 2.238 0 0 1 5 13c0-1.01.377-2.042 1.09-2.904.243-.294.526-.569.846-.816ZM4.92 10A5.493 5.493 0 0 0 4 13H1c0-.26.164-1.03.76-1.724.545-.636 1.492-1.256 3.16-1.275ZM1.5 5.5a3 3 0 1 1 6 0 3 3 0 0 1-6 0Zm3-2a2 2 0 1 0 0 4 2 2 0 0 0 0-4Z"/></svg>
<span class="t " style="left:143.6px;top:260.3px;font-size:33.6px;font-weight:400;color:#fff;letter-spacing:-1.73px;-webkit-text-stroke:0.35px #fff;">OPD</span>
<svg class="ic" style="left:584.2px;top:263px;color:#fff" width="30.6" height="30.6" viewBox="0 0 16 16" fill="currentColor" stroke="currentColor" stroke-width=".4"><path fill-rule="evenodd" d="M1.646 4.646a.5.5 0 0 1 .708 0L8 10.293l5.646-5.647a.5.5 0 0 1 .708.708l-6 6a.5.5 0 0 1-.708 0l-6-6a.5.5 0 0 1 0-.708z"/></svg>
<svg class="ic" style="left:72px;top:340px;color:#fff" width="36" height="36" viewBox="0 0 16 16" fill="currentColor" ><path d="M5 12.5a1.5 1.5 0 1 1-2-1.415V2.5a.5.5 0 0 1 1 0v9.085A1.5 1.5 0 0 1 5 12.5z"/><path d="M1 2.5a2.5 2.5 0 0 1 5 0v7.55a3.5 3.5 0 1 1-5 0V2.5zM3.5 1A1.5 1.5 0 0 0 2 2.5v7.987l-.167.15a2.5 2.5 0 1 0 3.333 0L5 10.486V2.5A1.5 1.5 0 0 0 3.5 1zm5 1a.5.5 0 0 1 .5.5v1a.5.5 0 0 1-1 0v-1a.5.5 0 0 1 .5-.5zm4.243 1.757a.5.5 0 0 1 0 .707l-.707.708a.5.5 0 1 1-.708-.708l.708-.707a.5.5 0 0 1 .707 0zM8 5.5a.5.5 0 0 1 .5-.5 3 3 0 1 1 0 6 .5.5 0 0 1 0-1 2 2 0 0 0 0-4 .5.5 0 0 1-.5-.5zM12.5 8a.5.5 0 0 1 .5-.5h1a.5.5 0 1 1 0 1h-1a.5.5 0 0 1-.5-.5zm-1.172 2.828a.5.5 0 0 1 .708 0l.707.708a.5.5 0 0 1-.707.707l-.708-.707a.5.5 0 0 1 0-.708zM8.5 12a.5.5 0 0 1 .5.5v1a.5.5 0 0 1-1 0v-1a.5.5 0 0 1 .5-.5z"/></svg>
<span class="t " style="left:144.4px;top:341.3px;font-size:33.6px;font-weight:400;color:#fff;letter-spacing:0.55px;-webkit-text-stroke:0.35px #fff;">Triage</span>
<svg class="ic" style="left:72px;top:421px;color:#fff" width="36" height="36" viewBox="0 0 16 16" fill="currentColor" ><path d="M5 0h8a2 2 0 0 1 2 2v10a2 2 0 0 1-2 2 2 2 0 0 1-2 2H3a2 2 0 0 1-2-2h1a1 1 0 0 0 1 1h8a1 1 0 0 0 1-1V4a1 1 0 0 0-1-1H3a1 1 0 0 0-1 1H1a2 2 0 0 1 2-2h8a2 2 0 0 1 2 2v9a1 1 0 0 0 1-1V2a1 1 0 0 0-1-1H5a1 1 0 0 0-1 1H3a2 2 0 0 1 2-2z"/><path d="M1 6v-.5a.5.5 0 0 1 1 0V6h.5a.5.5 0 0 1 0 1h-2a.5.5 0 0 1 0-1H1zm0 3v-.5a.5.5 0 0 1 1 0V9h.5a.5.5 0 0 1 0 1h-2a.5.5 0 0 1 0-1H1zm0 2.500v.5H.5a.5.5 0 0 0 0 1h2a.5.5 0 0 0 0-1H2v-.5a.5.5 0 0 0-1 0z"/></svg>
<span class="t " style="left:143.8px;top:422.3px;font-size:33.6px;font-weight:400;color:#fff;letter-spacing:0.74px;-webkit-text-stroke:0.35px #fff;">HRIO</span>
<svg class="ic" style="left:584.2px;top:425px;color:#fff" width="30.6" height="30.6" viewBox="0 0 16 16" fill="currentColor" stroke="currentColor" stroke-width=".4"><path fill-rule="evenodd" d="M1.646 4.646a.5.5 0 0 1 .708 0L8 10.293l5.646-5.647a.5.5 0 0 1 .708.708l-6 6a.5.5 0 0 1-.708 0l-6-6a.5.5 0 0 1 0-.708z"/></svg>
<svg class="ic" style="left:72px;top:502px;color:#fff" width="36" height="36" viewBox="0 0 16 16" fill="currentColor" ><path d="M11 6a3 3 0 1 1-6 0 3 3 0 0 1 6 0z"/><path d="M2 0a2 2 0 0 0-2 2v12a2 2 0 0 0 2 2h12a2 2 0 0 0 2-2V2a2 2 0 0 0-2-2H2zm12 1a1 1 0 0 1 1 1v12a1 1 0 0 1-1 1v-1c0-1-1-4-6-4s-6 3-6 4v1a1 1 0 0 1-1-1V2a1 1 0 0 1 1-1h12z"/></svg>
<span class="t " style="left:143.5px;top:503.3px;font-size:33.6px;font-weight:400;color:#fff;letter-spacing:1.27px;-webkit-text-stroke:0.35px #fff;">Maternity</span>
<svg class="ic" style="left:584.2px;top:506px;color:#fff" width="30.6" height="30.6" viewBox="0 0 16 16" fill="currentColor" stroke="currentColor" stroke-width=".4"><path fill-rule="evenodd" d="M1.646 4.646a.5.5 0 0 1 .708 0L8 10.293l5.646-5.647a.5.5 0 0 1 .708.708l-6 6a.5.5 0 0 1-.708 0l-6-6a.5.5 0 0 1 0-.708z"/></svg>
<svg class="ic" style="left:72px;top:583px;color:#fff" width="36" height="36" viewBox="0 0 16 16" fill="currentColor" ><g transform="translate(0 -1.100) scale(1 1.040)"><path d="M2.5 1.5h3.6c.4 0 .8.2 1.1.5l.7.8c.1.1.3.2.5.2h5.6c.8 0 1.500.7 1.500 1.500v7.800c0 .6-.4 1-1 1h-.3l-.4-.6c-.3-.4-.9-.4-1.200 0l-.4.6H3.800l-.4-.6c-.3-.4-.9-.4-1.200 0l-.4.6h-.3c-.6 0-1-.4-1-1V3c0-.8.700-1.500 2-1.500zm-1 1.500v9h.1c.7-.8 1.900-.8 2.600 0h.3c.2-1.600 1.500-2.600 3.500-2.600s3.300 1 3.500 2.600h.3c.7-.8 1.900-.8 2.600 0h.1V4.500c0-.3-.2-.5-.5-.5H8.400c-.5 0-.9-.2-1.200-.5l-.7-.8c-.1-.1-.3-.2-.4-.2H2.500c-.6 0-1 .2-1 .5z"/><circle cx="8" cy="6.400" r="2.100"/></g></svg>
<span class="t " style="left:143.5px;top:584.3px;font-size:33.6px;font-weight:400;color:#fff;letter-spacing:-1.40px;-webkit-text-stroke:0.35px #fff;">MCH</span>
<svg class="ic" style="left:584.2px;top:587px;color:#fff" width="30.6" height="30.6" viewBox="0 0 16 16" fill="currentColor" stroke="currentColor" stroke-width=".4"><path fill-rule="evenodd" d="M1.646 4.646a.5.5 0 0 1 .708 0L8 10.293l5.646-5.647a.5.5 0 0 1 .708.708l-6 6a.5.5 0 0 1-.708 0l-6-6a.5.5 0 0 1 0-.708z"/></svg>
<svg class="ic" style="left:72px;top:664px;color:#fff" width="36" height="36" viewBox="0 0 16 16" fill="currentColor" ><rect x="2.500" y="0.500" width="11" height="15" rx=".8" fill="none" stroke="currentColor" stroke-width="1" stroke-linecap="round" stroke-linejoin="round"/><path d="M4.500 2.500h1.600v1.600h-1.600zM7.200 2.500h1.600v1.600h-1.600zM9.900 2.500h1.600v1.600h-1.600zM4.500 5.300h1.600v1.600h-1.600zM7.200 5.300h1.600v1.600h-1.600zM9.900 5.300h1.600v1.600h-1.600zM4.500 8.100h1.600v1.600h-1.600zM7.200 8.100h1.600v1.600h-1.600zM9.900 8.100h1.600v1.600h-1.600zM6 11.500h4v4h-4z"/></svg>
<span class="t " style="left:143.5px;top:665.3px;font-size:33.6px;font-weight:400;color:#fff;letter-spacing:1.02px;-webkit-text-stroke:0.35px #fff;">Hospital</span>
<svg class="ic" style="left:584.2px;top:668px;color:#fff" width="30.6" height="30.6" viewBox="0 0 16 16" fill="currentColor" stroke="currentColor" stroke-width=".4"><path fill-rule="evenodd" d="M1.646 4.646a.5.5 0 0 1 .708 0L8 10.293l5.646-5.647a.5.5 0 0 1 .708.708l-6 6a.5.5 0 0 1-.708 0l-6-6a.5.5 0 0 1 0-.708z"/></svg>
<svg class="ic" style="left:72px;top:745px;color:#fff" width="36" height="36" viewBox="0 0 16 16" fill="currentColor" ><g fill="none" stroke="currentColor" stroke-width="1" stroke-linecap="round" stroke-linejoin="round"><path d="M.5 3.500v-3h3M12.500.500h3v3M15.500 12.500v3h-3M3.500 15.500h-3v-3"/><rect x="2.500" y="2.500" width="4" height="4" rx=".3"/><rect x="9.500" y="2.500" width="4" height="4" rx=".3"/><rect x="2.500" y="9.500" width="4" height="4" rx=".3"/></g><path d="M4 4h1v1H4zM11 4h1v1h-1zM4 11h1v1H4zM9 9h2v1H9zM12 9h2v1h-2zM9 11h1v1h1v1H9zM11 10h1v1h-1zM12 11h2v1h-2zM12 13h2v1h-2zM10 13h1v1h-1z"/></svg>
<span class="t " style="left:143.2px;top:746.3px;font-size:33.6px;font-weight:400;color:#fff;letter-spacing:2.47px;-webkit-text-stroke:0.35px #fff;">Imaging</span>
<svg class="ic" style="left:584.2px;top:749px;color:#fff" width="30.6" height="30.6" viewBox="0 0 16 16" fill="currentColor" stroke="currentColor" stroke-width=".4"><path fill-rule="evenodd" d="M1.646 4.646a.5.5 0 0 1 .708 0L8 10.293l5.646-5.647a.5.5 0 0 1 .708.708l-6 6a.5.5 0 0 1-.708 0l-6-6a.5.5 0 0 1 0-.708z"/></svg>
<svg class="ic" style="left:72px;top:826px;color:#fff" width="36" height="36" viewBox="0 0 16 16" fill="currentColor" ><path d="M8.900 1.100a3 3 0 0 1 0 4.300L5.400 8.900a3 3 0 0 1-4.300-4.300l3.500-3.500a3 3 0 0 1 4.300 0zM8.200 1.800a2 2 0 0 0-2.900 0L3.600 3.500l2.900 2.900 1.700-1.700a2 2 0 0 0 0-2.900z" transform="translate(0 .5)"/><circle cx="11.600" cy="11.600" r="3.400" fill="none" stroke="currentColor" stroke-width="1"/><path d="M11.600 8.400v6.400" stroke="currentColor" stroke-width="1"/></svg>
<span class="t " style="left:143.5px;top:827.3px;font-size:33.6px;font-weight:400;color:#fff;letter-spacing:0.54px;-webkit-text-stroke:0.35px #fff;">Pharmacy</span>
<svg class="ic" style="left:584.2px;top:830px;color:#fff" width="30.6" height="30.6" viewBox="0 0 16 16" fill="currentColor" stroke="currentColor" stroke-width=".4"><path fill-rule="evenodd" d="M1.646 4.646a.5.5 0 0 1 .708 0L8 10.293l5.646-5.647a.5.5 0 0 1 .708.708l-6 6a.5.5 0 0 1-.708 0l-6-6a.5.5 0 0 1 0-.708z"/></svg>
<svg class="ic" style="left:72px;top:907px;color:#fff" width="36" height="36" viewBox="0 0 16 16" fill="currentColor" ><circle cx="8" cy="8" r="7.500" fill="none" stroke="currentColor" stroke-width="1" stroke-linecap="round" stroke-linejoin="round"/><circle cx="8" cy="8" r="6" fill="none" stroke="currentColor" stroke-width=".6"/><text x="8" y="11" font-family="Liberation Sans, sans-serif" font-size="8.500" font-weight="700" text-anchor="middle" fill="currentColor">$</text></svg>
<span class="t " style="left:143.5px;top:908.3px;font-size:33.6px;font-weight:400;color:#fff;letter-spacing:0.32px;-webkit-text-stroke:0.35px #fff;">Finance</span>
<svg class="ic" style="left:584.2px;top:911px;color:#fff" width="30.6" height="30.6" viewBox="0 0 16 16" fill="currentColor" stroke="currentColor" stroke-width=".4"><path fill-rule="evenodd" d="M1.646 4.646a.5.5 0 0 1 .708 0L8 10.293l5.646-5.647a.5.5 0 0 1 .708.708l-6 6a.5.5 0 0 1-.708 0l-6-6a.5.5 0 0 1 0-.708z"/></svg>
<svg class="ic" style="left:72px;top:988px;color:#fff" width="36" height="36" viewBox="0 0 16 16" fill="currentColor" ><path d="M0 2.5A.5.5 0 0 1 .5 2H2a.5.5 0 0 1 .485.379L2.89 4H14.5a.5.5 0 0 1 .485.621l-1.5 6A.5.5 0 0 1 13 11H4a.5.5 0 0 1-.485-.379L1.61 3H.5a.5.5 0 0 1-.5-.5zM3.14 5l1.25 5h8.22l1.25-5H3.14zM5 13a1 1 0 1 0 0 2 1 1 0 0 0 0-2zm-2 1a2 2 0 1 1 4 0 2 2 0 0 1-4 0zm9-1a1 1 0 1 0 0 2 1 1 0 0 0 0-2zm-2 1a2 2 0 1 1 4 0 2 2 0 0 1-4 0z"/></svg>
<span class="t " style="left:143.5px;top:989.3px;font-size:33.6px;font-weight:400;color:#fff;letter-spacing:0.41px;-webkit-text-stroke:0.35px #fff;">Procurement</span>
<svg class="ic" style="left:584.2px;top:992px;color:#fff" width="30.6" height="30.6" viewBox="0 0 16 16" fill="currentColor" stroke="currentColor" stroke-width=".4"><path fill-rule="evenodd" d="M1.646 4.646a.5.5 0 0 1 .708 0L8 10.293l5.646-5.647a.5.5 0 0 1 .708.708l-6 6a.5.5 0 0 1-.708 0l-6-6a.5.5 0 0 1 0-.708z"/></svg>
<svg class="ic" style="left:72px;top:1069px;color:#fff" width="36" height="36" viewBox="0 0 16 16" fill="currentColor" ><g fill="none" stroke="currentColor" stroke-width="1" stroke-linecap="round" stroke-linejoin="round"><rect x=".5" y="2.500" width="15" height="11" rx="1"/><path d="M7.500 6h5M7.500 10h5"/><path d="M3 6l.8.800L5.500 5M3 10l.8.800L5.500 9"/></g></svg>
<span class="t " style="left:145.0px;top:1070.3px;font-size:33.6px;font-weight:400;color:#fff;letter-spacing:0.82px;-webkit-text-stroke:0.35px #fff;">Appointments</span>
<svg class="ic" style="left:72px;top:1150px;color:#fff" width="36" height="36" viewBox="0 0 16 16" fill="currentColor" ><path d="M16 8s-3-5.5-8-5.5S0 8 0 8s3 5.5 8 5.5S16 8 16 8zM1.173 8a13.133 13.133 0 0 1 1.66-2.043C4.12 4.668 5.88 3.5 8 3.5c2.12 0 3.879 1.168 5.168 2.457A13.133 13.133 0 0 1 14.828 8c-.058.087-.122.183-.195.288-.335.48-.83 1.12-1.465 1.755C11.879 11.332 10.119 12.5 8 12.5c-2.12 0-3.879-1.168-5.168-2.457A13.134 13.134 0 0 1 1.172 8z"/><path d="M8 5.5a2.5 2.5 0 1 0 0 5 2.5 2.5 0 0 0 0-5zM4.5 8a3.5 3.5 0 1 1 7 0 3.5 3.5 0 0 1-7 0z"/></svg>
<span class="t " style="left:143.5px;top:1151.3px;font-size:33.6px;font-weight:400;color:#fff;letter-spacing:-0.16px;-webkit-text-stroke:0.35px #fff;">Eye Clinic</span>
<svg class="ic" style="left:584.2px;top:1154px;color:#fff" width="30.6" height="30.6" viewBox="0 0 16 16" fill="currentColor" stroke="currentColor" stroke-width=".4"><path fill-rule="evenodd" d="M1.646 4.646a.5.5 0 0 1 .708 0L8 10.293l5.646-5.647a.5.5 0 0 1 .708.708l-6 6a.5.5 0 0 1-.708 0l-6-6a.5.5 0 0 1 0-.708z"/></svg>
<svg class="ic" style="left:72px;top:1231px;color:#fff" width="36" height="36" viewBox="0 0 16 16" fill="currentColor" ><rect x="4.500" y="4.500" width="11" height="11" rx="1.500" fill="none" stroke="currentColor" stroke-width="1" stroke-linecap="round" stroke-linejoin="round"/><rect x="0" y="0" width="12" height="12" rx="2"/></svg>
<span class="t " style="left:143.5px;top:1232.3px;font-size:33.6px;font-weight:400;color:#fff;letter-spacing:0.56px;-webkit-text-stroke:0.35px #fff;">Refferals</span>
<svg class="ic" style="left:72px;top:1312px;color:#fff" width="36" height="36" viewBox="0 0 16 16" fill="currentColor" ><circle cx="8" cy="8" r="7.500" fill="none" stroke="currentColor" stroke-width="1" stroke-linecap="round" stroke-linejoin="round"/><path d="M8 3.500L5.200 14.300M8 3.500l2.800 10.800" fill="none" stroke="currentColor" stroke-width="1.150" stroke-linecap="round"/><path d="M8 3l1.600 6h-3.200z"/></svg>
<span class="t " style="left:143.5px;top:1313.3px;font-size:33.6px;font-weight:400;color:#fff;letter-spacing:1.14px;-webkit-text-stroke:0.35px #fff;">Dental</span>
<svg class="ic" style="left:72px;top:1393px;color:#fff" width="36" height="36" viewBox="0 0 16 16" fill="currentColor" ><path d="M3.500 0h10.500v16h-10.500a2 2 0 0 1-2-2V2a2 2 0 0 1 2-2z"/><g fill="#0b1530" stroke="#0b1530"><circle cx="8.200" cy="4.200" r="1.900" stroke="none"/><path d="M5.300 6.300l5.800 3.400M11.100 6.300l-5.800 3.400" stroke-width="1" stroke-linecap="round"/><path d="M3 12h11v1.300H3z" stroke="none"/></g><g fill="#fff"><circle cx="7.500" cy="4" r=".5"/><circle cx="8.900" cy="4" r=".5"/><path d="M3.200 13.300h10.800v1.500H3.200z"/></g></svg>
<span class="t " style="left:143.5px;top:1394.3px;font-size:33.6px;font-weight:400;color:#fff;letter-spacing:0.61px;-webkit-text-stroke:0.35px #fff;">Mogue</span>
<svg class="ic" style="left:72px;top:1474px;color:#fff" width="36" height="36" viewBox="0 0 16 16" fill="currentColor" ><path d="M15 14s1 0 1-1-1-4-5-4-5 3-5 4 1 1 1 1h8Zm-7.978-1A.261.261 0 0 1 7 12.996c.001-.264.167-1.03.76-1.72C8.312 10.629 9.282 10 11 10c1.717 0 2.687.63 3.24 1.276.593.69.758 1.457.76 1.72l-.008.002a.274.274 0 0 1-.014.002H7.022ZM11 7a2 2 0 1 0 0-4 2 2 0 0 0 0 4Zm3-2a3 3 0 1 1-6 0 3 3 0 0 1 6 0ZM6.936 9.28a5.88 5.88 0 0 0-1.23-.247A7.35 7.35 0 0 0 5 9c-4 0-5 3-5 4 0 .667.333 1 1 1h4.216A2.238 2.238 0 0 1 5 13c0-1.01.377-2.042 1.09-2.904.243-.294.526-.569.846-.816ZM4.92 10A5.493 5.493 0 0 0 4 13H1c0-.26.164-1.03.76-1.724.545-.636 1.492-1.256 3.16-1.275ZM1.5 5.5a3 3 0 1 1 6 0 3 3 0 0 1-6 0Zm3-2a2 2 0 1 0 0 4 2 2 0 0 0 0-4Z"/></svg>
<span class="t " style="left:143.4px;top:1475.3px;font-size:33.6px;font-weight:400;color:#fff;letter-spacing:-0.51px;-webkit-text-stroke:0.35px #fff;">Users</span>
<svg class="ic" style="left:72px;top:1555px;color:#fff" width="36" height="36" viewBox="0 0 16 16" fill="currentColor" ><g fill="none" stroke="currentColor" stroke-width="1" stroke-linecap="round" stroke-linejoin="round"><rect x=".5" y="2.500" width="15" height="11" rx="1.200"/></g><path d="M2.500 5h3v2h-3zM2.500 8.300h5v1h-5zM2.500 10.500h1.500v1h-1.500zM5 10.500h2v1H5zM8 10.500h2v1H8zM11 10.500h2v1h-2z"/></svg>
<span class="t " style="left:144.4px;top:1556.3px;font-size:33.6px;font-weight:400;color:#fff;letter-spacing:0.35px;-webkit-text-stroke:0.35px #fff;">SHA Portal</span>
<svg class="ic" style="left:72px;top:1636px;color:#fff" width="36" height="36" viewBox="0 0 16 16" fill="currentColor" ><path d="M4 13.500H2A1.500 1.500 0 0 1 .5 12V3.500A1.500 1.500 0 0 1 2 2h12a1.500 1.500 0 0 1 1.500 1.500V12a1.500 1.500 0 0 1-1.500 1.500h-2" fill="none" stroke="currentColor" stroke-width="1" stroke-linecap="round" stroke-linejoin="round"/><circle cx="8" cy="6.800" r="2.400"/><path d="M3 15c0-2.500 2-4.300 5-4.300s5 1.800 5 4.300c0 .8-10 .8-10 0z"/></svg>
<span class="t " style="left:143.1px;top:1637.3px;font-size:33.6px;font-weight:400;color:#fff;letter-spacing:0.03px;-webkit-text-stroke:0.35px #fff;">Human Resource</span>
<svg class="ic" style="left:584.2px;top:1640px;color:#fff" width="30.6" height="30.6" viewBox="0 0 16 16" fill="currentColor" stroke="currentColor" stroke-width=".4"><path fill-rule="evenodd" d="M1.646 4.646a.5.5 0 0 1 .708 0L8 10.293l5.646-5.647a.5.5 0 0 1 .708.708l-6 6a.5.5 0 0 1-.708 0l-6-6a.5.5 0 0 1 0-.708z"/></svg>
<svg class="ic" style="left:72px;top:1717px;color:#fff" width="36" height="36" viewBox="0 0 16 16" fill="currentColor" ><path d="M8 4.754a3.246 3.246 0 1 0 0 6.492 3.246 3.246 0 0 0 0-6.492zM5.754 8a2.246 2.246 0 1 1 4.492 0 2.246 2.246 0 0 1-4.492 0z"/><path d="M9.796 1.343c-.527-1.79-3.065-1.79-3.592 0l-.094.319a.873.873 0 0 1-1.255.52l-.292-.16c-1.64-.892-3.433.902-2.54 2.541l.159.292a.873.873 0 0 1-.52 1.255l-.319.094c-1.79.527-1.79 3.065 0 3.592l.319.094a.873.873 0 0 1 .52 1.255l-.16.292c-.892 1.64.901 3.434 2.541 2.54l.292-.159a.873.873 0 0 1 1.255.52l.094.319c.527 1.79 3.065 1.79 3.592 0l.094-.319a.873.873 0 0 1 1.255-.52l.292.16c1.64.893 3.434-.902 2.54-2.541l-.159-.292a.873.873 0 0 1 .52-1.255l.319-.094c1.79-.527 1.79-3.065 0-3.592l-.319-.094a.873.873 0 0 1-.52-1.255l.16-.292c.893-1.64-.902-3.433-2.541-2.54l-.292.159a.873.873 0 0 1-1.255-.52l-.094-.319zm-2.633.283c.246-.835 1.428-.835 1.674 0l.094.319a1.873 1.873 0 0 0 2.693 1.115l.291-.16c.764-.415 1.6.42 1.184 1.185l-.159.292a1.873 1.873 0 0 0 1.116 2.692l.318.094c.835.246.835 1.428 0 1.674l-.319.094a1.873 1.873 0 0 0-1.115 2.693l.16.291c.415.764-.42 1.6-1.185 1.184l-.291-.159a1.873 1.873 0 0 0-2.693 1.116l-.094.318c-.246.835-1.428.835-1.674 0l-.094-.319a1.873 1.873 0 0 0-2.692-1.115l-.292.16c-.764.415-1.6-.42-1.184-1.185l.159-.291A1.873 1.873 0 0 0 1.945 8.93l-.319-.094c-.835-.246-.835-1.428 0-1.674l.319-.094A1.873 1.873 0 0 0 3.06 4.377l-.16-.292c-.415-.764.42-1.6 1.185-1.184l.292.159a1.873 1.873 0 0 0 2.692-1.115l.094-.319z"/></svg>
<span class="t " style="left:144.4px;top:1718.3px;font-size:33.6px;font-weight:400;color:#fff;letter-spacing:0.57px;-webkit-text-stroke:0.35px #fff;">Settings</span>
<svg class="ic" style="left:584.2px;top:1721px;color:#fff" width="30.6" height="30.6" viewBox="0 0 16 16" fill="currentColor" stroke="currentColor" stroke-width=".4"><path fill-rule="evenodd" d="M1.646 4.646a.5.5 0 0 1 .708 0L8 10.293l5.646-5.647a.5.5 0 0 1 .708.708l-6 6a.5.5 0 0 1-.708 0l-6-6a.5.5 0 0 1 0-.708z"/></svg>
</nav>
<div class="b" style="left:690px;top:2px;width:30px;height:1755px;background:#f1f1f2;"></div>
<svg class="ic" style="left:696px;top:11px" width="18" height="15" viewBox="0 0 18 15"><path d="M9 1.500L16.500 13h-15z" fill="#d3d4d7" stroke="#d3d4d7" stroke-width="3" stroke-linejoin="round"/></svg>
<div class="b" style="left:696px;top:38px;width:18px;height:1632px;background:#d3d4d7;border-radius:9px;"></div>
<svg class="ic" style="left:696px;top:1735px" width="18" height="15" viewBox="0 0 18 15"><path d="M9 13.500L16.500 2h-15z" fill="#d3d4d7" stroke="#d3d4d7" stroke-width="3" stroke-linejoin="round"/></svg>
<div class="b" style="left:0px;top:0px;width:3840px;height:2px;background:#e9e9ea;"></div>
<div class="b" style="left:0px;top:1757px;width:3840px;height:3px;background:#b9b6c1;"></div>
<div class="b" style="left:0px;top:1760px;width:3840px;height:19px;background:linear-gradient(90deg,#d8e3f0 0%,#dfe1f0 16.600%,#e8dff0 23.400%,#f0dbe8 30%,#f3dde2 33.800%,#ede0f1 39%,#e6e2f2 45.500%,#d9e4f3 52%,#d5e5f5 57.300%,#dde5f4 67.700%,#e6e3f3 75.500%,#dfeaf9 86%,#e1e9f6 100%);"></div>
<div class="b" style="left:1377px;top:1772px;width:114px;height:10px;background:#f5f0f8;border-radius:9px 9px 0 0;border:1px solid #e6dfea;"></div>
<div class="b" style="left:2302px;top:1768.5px;width:119px;height:12px;background:#e9aba6;border-radius:11px 11px 0 0;"></div>
<div class="b" style="left:106px;top:1776.5px;width:16px;height:4px;background:#c0392b;border-radius:3px;"></div>
</body></html>
